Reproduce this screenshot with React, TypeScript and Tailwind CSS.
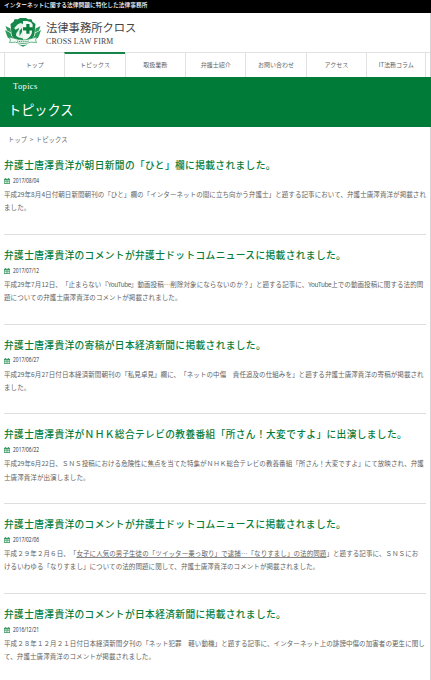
import type { ReactNode } from "react";

type Topic = {
  title: string;
  date: string;
  lines: ReactNode[];
};

const navItems = ["トップ", "トピックス", "取扱業務", "弁護士紹介", "お問い合わせ", "アクセス", "IT法務コラム"];

const topics: Topic[] = [
  {
    title: "弁護士唐澤貴洋が朝日新聞の「ひと」欄に掲載されました。",
    date: "2017/08/04",
    lines: [
      "平成29年8月4日付朝日新聞朝刊の「ひと」欄の「インターネットの闇に立ち向かう弁護士」と題する記事において、弁護士唐澤貴洋が掲載され",
      "ました。",
    ],
  },
  {
    title: "弁護士唐澤貴洋のコメントが弁護士ドットコムニュースに掲載されました。",
    date: "2017/07/12",
    lines: [
      <>
        平成29年7月12日、「止まらない『<span className="tracking-[-0.45px]">YouTube</span>』動画投稿…削除対象にならないのか？」と題する記事に、
        <span className="tracking-[-0.45px]">YouTube</span>上での動画投稿に関する法的問
      </>,
      "題についての弁護士唐澤貴洋のコメントが掲載されました。",
    ],
  },
  {
    title: "弁護士唐澤貴洋の寄稿が日本経済新聞に掲載されました。",
    date: "2017/06/27",
    lines: [
      "平成29年6月27日付日本経済新聞朝刊の「私見卓見」欄に、「ネットの中傷　責任追及の仕組みを」と題する弁護士唐澤貴洋の寄稿が掲載され",
      "ました。",
    ],
  },
  {
    title: "弁護士唐澤貴洋がＮＨＫ総合テレビの教養番組「所さん！大変ですよ」に出演しました。",
    date: "2017/06/22",
    lines: [
      "平成29年6月22日、ＳＮＳ投稿における危険性に焦点を当てた特集がＮＨＫ総合テレビの教養番組「所さん！大変ですよ」にて放映され、弁護",
      "士唐澤貴洋が出演しました。",
    ],
  },
  {
    title: "弁護士唐澤貴洋のコメントが弁護士ドットコムニュースに掲載されました。",
    date: "2017/02/06",
    lines: [
      <>
        平成２９年２月６日、「
        <a className="underline decoration-[#888] decoration-[0.7px] underline-offset-1">女子に人気の男子生徒の「ツイッター乗っ取り」で逮捕…「なりすまし」の法的問題</a>
        」と題する記事に、ＳＮＳにお
      </>,
      "けるいわゆる「なりすまし」についての法的問題に関して、弁護士唐澤貴洋のコメントが掲載されました。",
    ],
  },
  {
    title: "弁護士唐澤貴洋のコメントが日本経済新聞に掲載されました。",
    date: "2016/12/21",
    lines: [
      "平成２８年１２月２１日付日本経済新聞夕刊の「ネット犯罪　軽い動機」と題する記事に、インターネット上の誹謗中傷の加害者の更生に関し",
      "て、弁護士唐澤貴洋のコメントが掲載されました。",
    ],
  },
];

function Emblem() {
  return (
    <svg viewBox="0 0 36 30" className="h-[30px] w-9 shrink-0" fill="none">
      <path
        d="M.5 9l5 2.500.5 4-4-2zM0 13l5.500 3 1 3.500-5-2zM1.500 17.500l5.500 1.500 1 3-5-1zM35.500 9l-5 2.500-.5 4 4-2zM36 13l-5.500 3-1 3.500 5-2zM34.500 17.500L29 19l-1 3 5-1z"
        fill="#2f9a5d"
      />
      <path d="M15 1h6l2 1.200h3.500l1 2.500L30.500 7l-1 10c-1 5-5.500 7.500-11.500 9.500C12 24.500 7.500 22 6.500 17l-1-10 3-2.300 1-2.500H13z" fill="#16874a" />
      <path d="M18 4h4l4 1.300 1.700 2.500-1 8.500c-1 3.700-4 5.700-8.700 7.700z" fill="#f3faf5" />
      <path d="M11 18.500c0-4 3-4.500 3-7.500l-3.500 1.800L9.200 11l3.300-3.500 3-1.500 2.500 1v14.500c-3-.5-5.500-1-7-3z" fill="#e6f3ea" />
      <path d="M14.500 14l2.500-3v4l-2.500 4z" fill="#16874a" />
      <path d="M21.300 7h3.200v3.300h3.200v3.200h-3.200v3.300h-3.200v-3.300H18v-3.200h3.300z" fill="#0b7c3b" />
      <path d="M4 20l7 1.800c4 1.500 10 1.500 14 0L32 20l-1.500 3 1 2.500-6-.3c-4 1.800-11 1.800-15 0l-6 .3 1-2.500z" fill="#f5faf7" stroke="#2f9a5d" strokeWidth=".7" />
      <path d="M12 24c4 1 8 1 12 0" stroke="#2f9a5d" strokeWidth="1" strokeDasharray="1.200 .7" />
      <path d="M13 27.300c3 .8 7 .8 10 0l-5 2.500z" fill="#2f9a5d" />
    </svg>
  );
}

function CalendarIcon() {
  return (
    <svg viewBox="0 0 6 6" className="h-1.5 w-1.5 shrink-0">
      <path d="M0 .8h6V6H0zM1.200 0h.8v1h-.8zM4 0h.8v1H4z" fill="#3a9c63" />
      <path d="M.6 2.300h1.300v1.200H.6zM2.400 2.300h1.200v1.200H2.400zM4.100 2.300h1.300v1.200H4.100zM.6 4.100h1.300v1.200H.6zM2.400 4.100h1.200v1.200H2.400zM4.100 4.100h1.300v1.200H4.100z" fill="#e6f4ec" />
    </svg>
  );
}

function TopicItem({ topic }: { topic: Topic }) {
  return (
    <article className="h-[89.8px] border-b border-[#dedede] pt-3 whitespace-nowrap">
      <h2 className="text-[9.7px] leading-4 font-medium tracking-[0.39px] text-[#087d3b]">{topic.title}</h2>
      <div className="mt-[3px] flex h-2.5 items-center gap-[3px]">
        <CalendarIcon />
        <time className="origin-left scale-x-[0.77] font-['Open_Sans'] text-[6.4px] leading-none font-medium text-[#333]">
          {topic.date}
        </time>
      </div>
      <div className="mt-0.5 text-[6.5px] leading-[13.2px] tracking-[0.08px] text-[#626262]">
        {topic.lines.map((line, i) => (
          <p key={i}>{line}</p>
        ))}
      </div>
    </article>
  );
}

export default function App() {
  return (
    <div
      lang="ja"
      className="h-[680px] w-[431px] overflow-hidden bg-white font-['Noto_Sans_CJK_JP',sans-serif] [text-spacing-trim:space-all]"
    >
      <div className="h-[13px] bg-black pl-1 text-[5.7px] leading-[10px] font-medium tracking-[0.05px] text-white">
        インターネットに関する法律問題に特化した法律事務所
      </div>
      <div className="h-[667px] border-r border-[#d4d4d4]">
        <header className="flex h-[39px] items-start pt-[4px] pl-[5px]">
          <Emblem />
          <div className="ml-[5px] whitespace-nowrap text-[#444]">
            <div className="text-[11.3px] leading-[20px]">法律事務所クロス</div>
            <div className="font-['Liberation_Serif',serif] text-[7.8px] leading-[9px] tracking-[0.2px]">CROSS LAW FIRM</div>
          </div>
        </header>
        <nav className="flex h-[25px] border-t border-[#e2e2e2] pl-1">
          {navItems.map((item) => (
            <a
              key={item}
              className={
                item === "トピックス"
                  ? "-mt-px w-[60.35px] border-t-2 border-l border-t-[#16854a] border-l-[#e2e2e2] text-center text-[6px] leading-[22px] text-[#666]"
                  : "w-[60.35px] border-l border-[#e2e2e2] text-center text-[6px] leading-[23px] text-[#666] last:border-r"
              }
            >
              {item}
            </a>
          ))}
        </nav>
        <div className="-mr-px h-[50px] bg-[#007b38] text-white">
          <p className="pt-[3px] pl-[13px] font-['Liberation_Serif',serif] text-[8.5px] leading-[13px] tracking-[0.35px]">Topics</p>
          <h1 className="mt-[8px] pl-2 text-[13.2px] leading-[18px]">トピックス</h1>
        </div>
        <div className="h-[18px] pl-2 text-[6.3px] leading-[25px] tracking-[0.1px] text-[#666] [word-spacing:1px]">トップ &gt; トピックス</div>
        <main className="ml-1 w-[422px]">
          {topics.map((topic) => (
            <TopicItem key={topic.date} topic={topic} />
          ))}
        </main>
      </div>
    </div>
  );
}
